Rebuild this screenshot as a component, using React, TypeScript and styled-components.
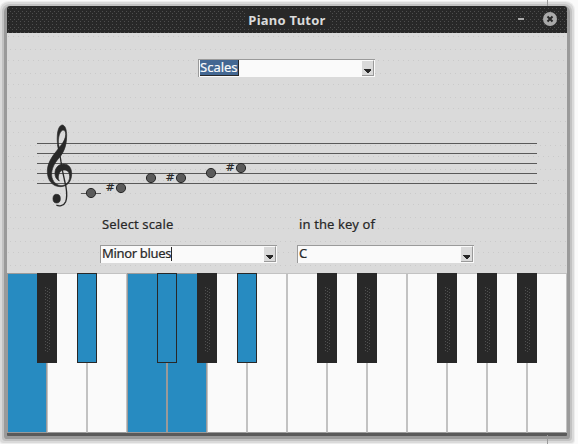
import React from "react";
import styled, { createGlobalStyle, css } from "styled-components";

const ink = "#282828";
const panel = "#dadada";
const paper = "#fafafa";
const edge = "#9a9a9a";
const blue = "#278bc1";

const dot = (color: string) => `conic-gradient(at 1px 1px, transparent 75%, ${color} 0)`;

const GlobalStyle = createGlobalStyle`
  * { box-sizing: border-box; }
  html, body { margin: 0; padding: 0; background: ${paper}; overflow: hidden; }
`;

const Desktop = styled.div`
  position: relative;
  width: 578px;
  height: 444px;
  padding: 6px 0 0 7px;
  overflow: hidden;
  background: ${paper};
  font-family: "Noto Sans", "Open Sans", sans-serif;
`;

const Guide = styled.i<{ $top: number; $height: number }>`
  position: absolute;
  left: 547px;
  top: ${(p) => p.$top}px;
  width: 1px;
  height: ${(p) => p.$height}px;
  background: ${edge};
`;

const Window = styled.main`
  width: 560px;
  height: 427px;
  display: flex;
  flex-direction: column;
  border-radius: 3px 3px 1px 1px;
  overflow: visible;
  background: ${panel};
  box-shadow: 0 3px 0 0 #5a5a5a, 0 3px 0 3px ${edge}, 0 3px 0 5px #c2c2c2,
    0 3px 0 7px #dadada, 0 3px 0 8px #ededed;
`;

const TitleBar = styled.header`
  height: 27px;
  flex: none;
  display: grid;
  grid-template-columns: 1fr auto 1fr;
  align-items: center;
  padding: 0 10px;
  border-radius: 3px 3px 0 0;
  background-color: ${ink};
  background-image: ${dot("#4e4e4e")}, ${dot("#4e4e4e")}, ${dot("#4e4e4e")};
  background-size: 4px 8px;
  background-position: 1px 2px, 3px 5px, 1px 7px;
`;

const Title = styled.h1`
  grid-column: 2;
  margin: 0;
  padding: 1px 3px 0;
  background: ${ink};
  color: #dadada;
  font-size: 13px;
  line-height: 18px;
  font-weight: 700;
  letter-spacing: 0.25px;
  white-space: nowrap;
`;

const WindowActions = styled.div`
  display: flex;
  align-items: center;
  justify-content: flex-end;
  gap: 19px;
`;

const Minimize = styled.span`
  width: 6px;
  height: 2px;
  margin-bottom: 1px;
  background: #aaa;
`;

const CloseIcon = styled.svg`
  width: 14px;
  height: 14px;
  margin-bottom: 1px;
`;

const Workspace = styled.section`
  height: 240px;
  flex: none;
  display: flex;
  flex-direction: column;
  background-image: ${dot("#cacaca")}, ${dot("#cacaca")};
  background-size: 5px 24px;
  background-position: 3px 16px, 1px 27px;
`;

const ModeRow = styled.div`
  height: 87px;
  padding: 26px 0 0 191px;
`;

const Staff = styled.svg`
  display: block;
  width: 560px;
  height: 95px;
  flex: none;
`;

const Options = styled.div`
  display: grid;
  grid-template-columns: 177px 177px;
  column-gap: 20px;
  padding-left: 93px;
`;

const Field = styled.label`
  display: flex;
  flex-direction: column;
  color: ${ink};
  font-size: 13px;
`;

const Caption = styled.span`
  height: 30px;
  padding-left: 2px;
  line-height: 18px;
  letter-spacing: 0.12px;
  -webkit-text-stroke: 0.2px ${ink};
`;

const Combo = styled.div`
  width: 177px;
  height: 18px;
  display: flex;
  justify-content: space-between;
  padding-left: 1px;
  border-top: 1px solid ${edge};
  border-left: 1px solid ${edge};
  background: ${paper};
  font-size: 13px;
  color: ${ink};
`;

const Value = styled.span<{ $selected?: boolean; $caret?: boolean }>`
  height: 16px;
  line-height: 15px;
  white-space: nowrap;
  -webkit-text-stroke: 0.2px currentColor;
  ${(p) =>
    p.$selected &&
    css`
      background: #436792;
      color: #fafafa;
      border-right: 1px solid ${ink};
      border-bottom: 1px solid ${ink};
    `}
  ${(p) =>
    p.$caret &&
    css`
      height: 14px;
      margin-top: 1px;
      line-height: 13px;
      letter-spacing: -0.32px;
      border-right: 1px solid ${ink};
    `}
`;

const Arrow = styled.span`
  width: 12px;
  height: 16px;
  margin-right: 1px;
  display: flex;
  justify-content: center;
  padding-top: 8px;
  background: ${panel};
  border-top: 1px solid ${paper};
  border-right: 1px solid ${edge};
  border-bottom: 1px solid ${edge};
`;

const Keyboard = styled.div`
  position: relative;
  display: flex;
  height: 160px;
  flex: none;
`;

const WhiteKey = styled.div<{ $lit: boolean }>`
  width: 40px;
  height: 160px;
  border: 1px solid ${(p) => (p.$lit ? edge : "#c2c2c2")};
  border-bottom-color: ${edge};
  background: ${(p) => (p.$lit ? blue : paper)};
`;

const BlackKey = styled.div<{ $lit: boolean; $slot: number }>`
  position: absolute;
  left: ${(p) => p.$slot * 40 - 10}px;
  top: 0;
  width: 20px;
  height: 90px;
  padding: 12px 6px;
  border: 1px solid ${ink};
  background: ${(p) => (p.$lit ? blue : ink)};
`;

const Grain = styled.div`
  width: 6px;
  height: 66px;
  border-radius: 3px;
  background-image: ${dot("#505050")}, ${dot("#505050")}, ${dot("#505050")};
  background-size: 6px 3px;
  background-position: 1px 1px, 3px 2px, 5px 0;
`;

const notes = [
  { x: 91, y: 193 },
  { x: 121, y: 188, sharp: true },
  { x: 151, y: 178 },
  { x: 181, y: 178, sharp: true },
  { x: 211, y: 173 },
  { x: 241, y: 168, sharp: true },
];
const litWhite = [0, 3, 4];
const blackSlots = [1, 2, 4, 5, 6, 8, 9, 11, 12, 13];
const litBlack = [2, 4, 6];

function ComboBox({ value, selected, caret }: { value: string; selected?: boolean; caret?: boolean }) {
  return (
    <Combo>
      <Value $selected={selected} $caret={caret}>{value}</Value>
      <Arrow>
        <svg width="7" height="5" viewBox="0 0 7 5" shapeRendering="crispEdges">
          <path d="M0 0H7V1L4 4H3L0 1Z" fill={ink} />
        </svg>
      </Arrow>
    </Combo>
  );
}

function TrebleClef() {
  return (
    <g transform="translate(30 110) scale(.33333)" fill={ink} stroke={ink} strokeWidth="2" strokeLinejoin="round">
      <path
        fillRule="evenodd"
        d="M97 45C105 46 110 58 110 77C110 103 104 121 92 138C76 156 68 168 65 188C63 208 74 225 93 227C109 227 119 214 119 200C119 186 112 180 102 180C93 180 88 186 86 195C84 203 85 208 88 213C78 208 74 199 75 187C76 172 87 162 101 162C117 162 125 175 125 191C125 215 111 230 91 230C67 230 52 211 52 184C52 162 64 142 79 124L86 115C82 105 81 92 82 76C83 59 88 46 97 45ZM99 60C90 63 85 79 85 96C85 102 86 108 88 112C99 100 107 86 107 73C107 65 104 60 99 60Z"
      />
      <path d="M84 104C85 124 91 137 93 155L98 185L108 231C111 249 111 264 107 275C101 289 86 289 79 285" fill="none" strokeWidth="4" />
      <ellipse cx="80" cy="266" rx="11" ry="13" />
    </g>
  );
}

export default function App() {
  return (
    <Desktop>
      <GlobalStyle />
      <Window>
        <TitleBar>
          <Title>Piano Tutor</Title>
          <WindowActions>
            <Minimize />
            <CloseIcon viewBox="0 0 14 14">
              <circle cx="7" cy="7" r="7" fill="#aaa" />
              <path d="M4.5 4.5L9.5 9.5M9.5 4.5L4.5 9.5" stroke={ink} strokeWidth="2" />
            </CloseIcon>
          </WindowActions>
        </TitleBar>
        <Workspace>
          <ModeRow>
            <ComboBox value="Scales" selected />
          </ModeRow>
          <Staff viewBox="7 120 560 95">
            {[143, 153, 163, 173, 183].map((y) => (
              <rect key={y} x="37" y={y} width="500" height="1" fill="#5a5a5a" />
            ))}
            <rect x="81" y="193" width="20" height="1" fill="#5a5a5a" />
            <TrebleClef />
            {notes.map((n) => (
              <g key={n.x}>
                <circle cx={n.x} cy={n.y} r="4.6" fill="#5a5a5a" stroke={ink} />
                {n.sharp && (
                  <text x={n.x - 15.5} y={n.y + 3} fontSize="11" fill={ink} stroke={ink} strokeWidth="0.2" fontFamily="DejaVu Sans, sans-serif">#</text>
                )}
              </g>
            ))}
          </Staff>
          <Options>
            <Field>
              <Caption>Select scale</Caption>
              <ComboBox value="Minor blues" caret />
            </Field>
            <Field>
              <Caption>in the key of</Caption>
              <ComboBox value="C" />
            </Field>
          </Options>
        </Workspace>
        <Keyboard>
          {Array.from({ length: 14 }, (_, i) => (
            <WhiteKey key={i} $lit={litWhite.includes(i)} />
          ))}
          {blackSlots.map((slot) => (
            <BlackKey key={slot} $slot={slot} $lit={litBlack.includes(slot)}>
              {!litBlack.includes(slot) && <Grain />}
            </BlackKey>
          ))}
        </Keyboard>
      </Window>
      <Guide $top={0} $height={6} />
      <Guide $top={435} $height={9} />
    </Desktop>
  );
}
